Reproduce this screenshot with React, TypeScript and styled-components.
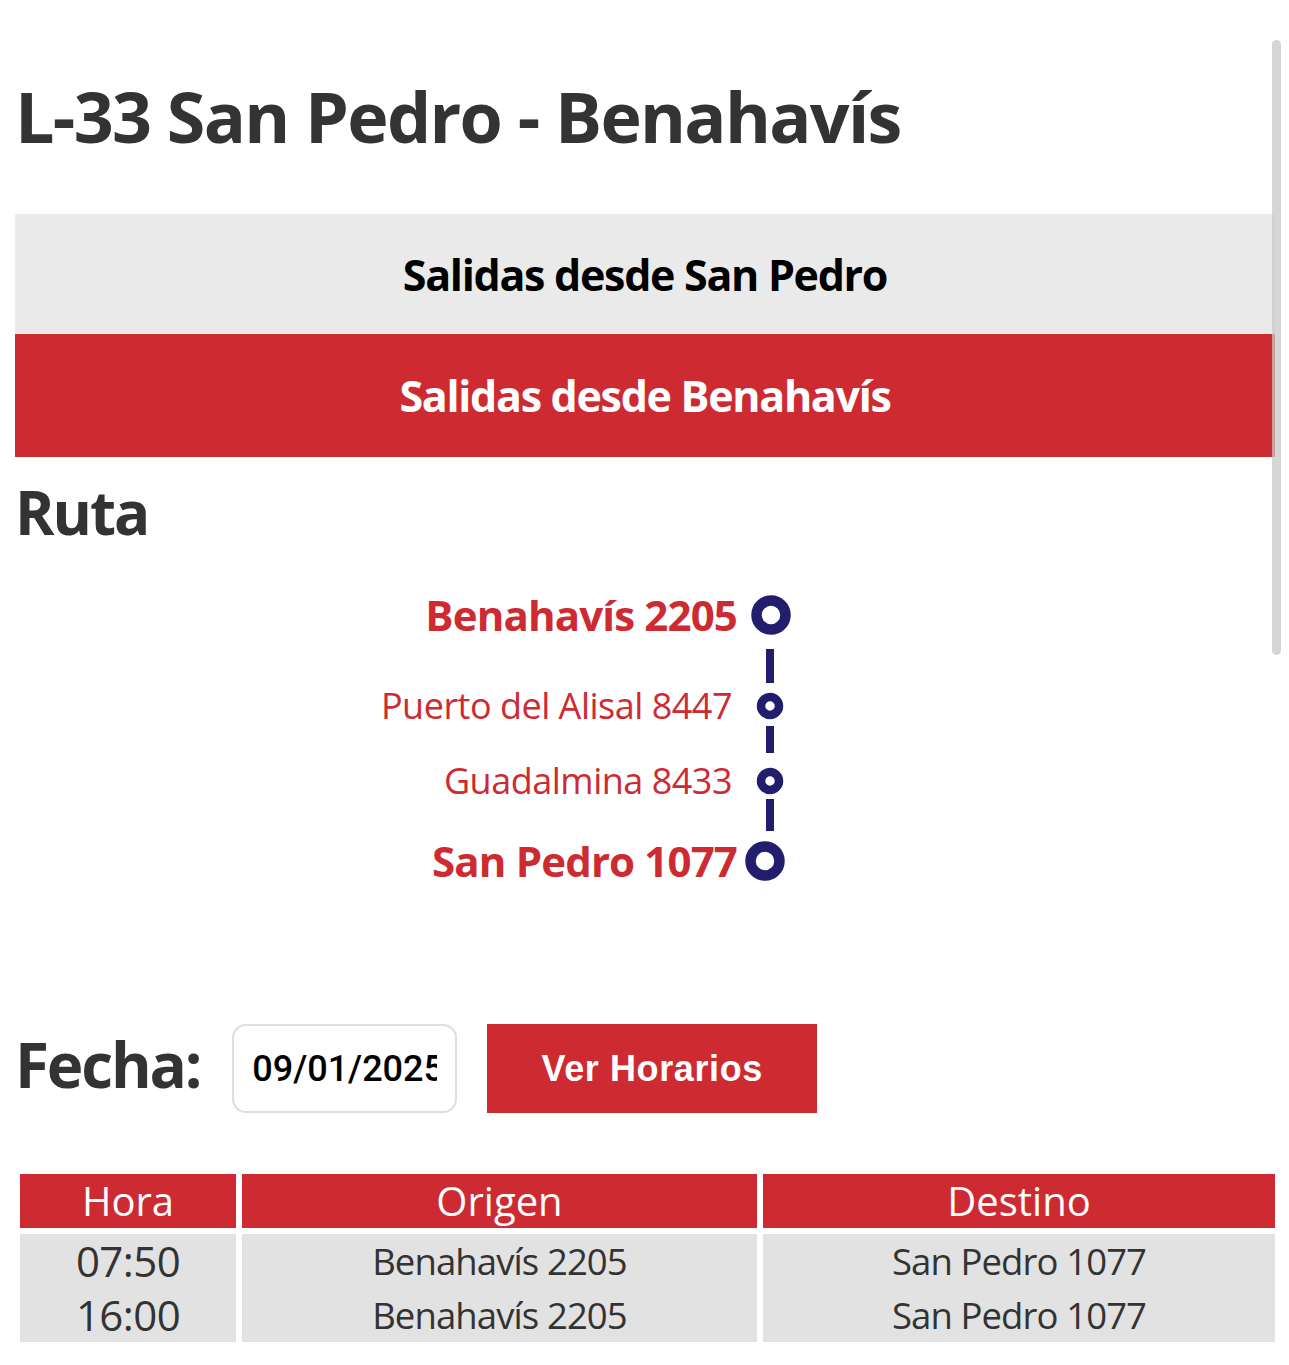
import React from "react";
import styled, { createGlobalStyle } from "styled-components";

const RED = "#cd2a32";
const NAVY = "#221d6d";

const Global = createGlobalStyle`
  html, body { margin: 0; padding: 0; background: #fff; }
  body { font-family: "Open Sans", "Noto Sans", sans-serif; color: #333; }
  * { box-sizing: border-box; }
`;

const Page = styled.div`
  position: relative;
  width: 1289px;
  padding: 72px 14px 40px 15px;
`;

const ScrollThumb = styled.div`
  position: absolute;
  top: 40px;
  left: 1272px;
  width: 9px;
  height: 615px;
  border-radius: 5px;
  background: rgba(200, 200, 200, 0.75);
`;

const Title = styled.h1`
  margin: 0;
  font-size: 70px;
  line-height: 89px;
  font-weight: 700;
  letter-spacing: -1.7px;
  color: #333;
`;

const Tabs = styled.div`
  margin-top: 53px;
  display: flex;
  flex-direction: column;
`;

const Tab = styled.div<{ $active?: boolean; $h: number }>`
  height: ${(p) => p.$h}px;
  display: flex;
  align-items: center;
  justify-content: center;
  font-size: 43px;
  font-weight: 700;
  letter-spacing: -1.3px;
  background: ${(p) => (p.$active ? RED : "#eaeaea")};
  color: ${(p) => (p.$active ? "#fff" : "#000")};
`;

const SectionTitle = styled.h2`
  margin: 19px 0 0;
  font-size: 60px;
  line-height: 72px;
  font-weight: 700;
  letter-spacing: -2px;
  color: #333;
`;

const Diagram = styled.div`
  margin-top: 45px;
  width: 785px;
  display: flex;
  flex-direction: column;
  align-items: stretch;
`;

const StopRow = styled.div<{ $h: number }>`
  height: ${(p) => p.$h}px;
  display: flex;
  justify-content: flex-end;
  align-items: center;
`;

const StopLabel = styled.span<{ $major?: boolean }>`
  color: ${RED};
  font-size: ${(p) => (p.$major ? 42 : 36)}px;
  font-weight: ${(p) => (p.$major ? 700 : 400)};
  letter-spacing: ${(p) => (p.$major ? -0.85 : -0.5)}px;
  line-height: 1;
  white-space: nowrap;
  margin-right: ${(p) => (p.$major ? 3 : 8)}px;
`;

const MarkerBox = styled.div`
  width: 60px;
  display: flex;
  justify-content: center;
`;

const Connector = styled.div<{ $h: number }>`
  height: ${(p) => p.$h}px;
  display: flex;
  justify-content: flex-end;
`;

const Marker = ({ major, dx = 0 }: { major?: boolean; dx?: number }) => {
  const size = major ? 42 : 28;
  const r = major ? 14.5 : 9;
  const sw = major ? 10.5 : 8.5;
  return (
    <svg width={size} height={size} viewBox={`0 0 ${size} ${size}`} style={{ marginLeft: dx * 2 }}>
      <circle cx={size / 2} cy={size / 2} r={r} fill="none" stroke={NAVY} strokeWidth={sw} />
    </svg>
  );
};

const Segment = ({ h, y1, y2 }: { h: number; y1: number; y2: number }) => (
  <svg width={60} height={h} viewBox={`0 0 60 ${h}`}>
    <line x1={30} x2={30} y1={y1} y2={y2} stroke={NAVY} strokeWidth={8} />
  </svg>
);

const FechaRow = styled.div`
  margin-top: 141px;
  height: 89px;
  display: flex;
  align-items: center;
`;

const FechaLabel = styled.label`
  font-size: 62px;
  font-weight: 700;
  line-height: 1;
  letter-spacing: -2.2px;
  color: #333;
  margin: 0 32px 0 0;
  padding-bottom: 9px;
`;

const DateInput = styled.input`
  width: 225px;
  height: 89px;
  border: 2px solid #dedede;
  border-radius: 14px;
  padding: 0 18px;
  font-family: "Roboto", "Liberation Sans", Arial, sans-serif;
  font-weight: 500;
  font-size: 36px;
  letter-spacing: 0;
  color: #000;
  background: #fff;
  outline: none;
`;

const Button = styled.button`
  margin-left: 30px;
  width: 330px;
  height: 89px;
  border: none;
  background: ${RED};
  color: #fff;
  font-family: "Liberation Sans", Arial, sans-serif;
  font-weight: 700;
  font-size: 36px;
  letter-spacing: 0.6px;
  cursor: pointer;
`;

const Table = styled.table`
  margin-top: 55px;
  margin-left: -1px;
  width: calc(100% + 7px);
  border-collapse: separate;
  border-spacing: 6px;
  table-layout: fixed;
`;

const Th = styled.th`
  background: ${RED};
  color: #fff;
  font-weight: 400;
  font-size: 40px;
  line-height: 54px;
  height: 54px;
  padding: 0;
  text-align: center;
`;

const Td = styled.td<{ $big?: boolean }>`
  background: #e2e2e2;
  color: #333;
  font-size: ${(p) => (p.$big ? 42 : 36.5)}px;
  letter-spacing: ${(p) => (p.$big ? -0.6 : -0.9)}px;
  line-height: 54px;
  padding: 0;
  text-align: center;
  vertical-align: top;
`;

const rows = [
  { hora: "07:50", origen: "Benahavís 2205", destino: "San Pedro 1077" },
  { hora: "16:00", origen: "Benahavís 2205", destino: "San Pedro 1077" },
];

export default function App() {
  return (
    <Page>
      <Global />
      <ScrollThumb />
      <Title>L-33 San Pedro - Benahavís</Title>
      <Tabs>
        <Tab $h={120}>Salidas desde San Pedro</Tab>
        <Tab $h={123} $active>
          Salidas desde Benahavís
        </Tab>
      </Tabs>
      <SectionTitle>Ruta</SectionTitle>
      <Diagram>
        <StopRow $h={44}>
          <StopLabel $major>Benahavís 2205</StopLabel>
          <MarkerBox>
            <Marker major dx={1} />
          </MarkerBox>
        </StopRow>
        <Connector $h={55}>
          <Segment h={55} y1={12} y2={46} />
        </Connector>
        <StopRow $h={28}>
          <StopLabel>Puerto del Alisal 8447</StopLabel>
          <MarkerBox>
            <Marker />
          </MarkerBox>
        </StopRow>
        <Connector $h={47}>
          <Segment h={47} y1={6} y2={33} />
        </Connector>
        <StopRow $h={28}>
          <StopLabel>Guadalmina 8433</StopLabel>
          <MarkerBox>
            <Marker />
          </MarkerBox>
        </StopRow>
        <Connector $h={44}>
          <Segment h={44} y1={4} y2={36} />
        </Connector>
        <StopRow $h={44}>
          <StopLabel $major>San Pedro 1077</StopLabel>
          <MarkerBox>
            <Marker major dx={-5} />
          </MarkerBox>
        </StopRow>
      </Diagram>
      <FechaRow>
        <FechaLabel htmlFor="fecha">Fecha:</FechaLabel>
        <DateInput id="fecha" type="text" defaultValue="09/01/2025" readOnly />
        <Button type="button">Ver Horarios</Button>
      </FechaRow>
      <Table>
        <colgroup>
          <col style={{ width: "216px" }} />
          <col style={{ width: "515px" }} />
          <col />
        </colgroup>
        <thead>
          <tr>
            <Th>Hora</Th>
            <Th>Origen</Th>
            <Th>Destino</Th>
          </tr>
        </thead>
        <tbody>
          <tr>
            <Td $big>
              {rows.map((r) => (
                <div key={r.hora}>{r.hora}</div>
              ))}
            </Td>
            <Td>
              {rows.map((r) => (
                <div key={r.hora}>{r.origen}</div>
              ))}
            </Td>
            <Td>
              {rows.map((r) => (
                <div key={r.hora}>{r.destino}</div>
              ))}
            </Td>
          </tr>
        </tbody>
      </Table>
    </Page>
  );
}
